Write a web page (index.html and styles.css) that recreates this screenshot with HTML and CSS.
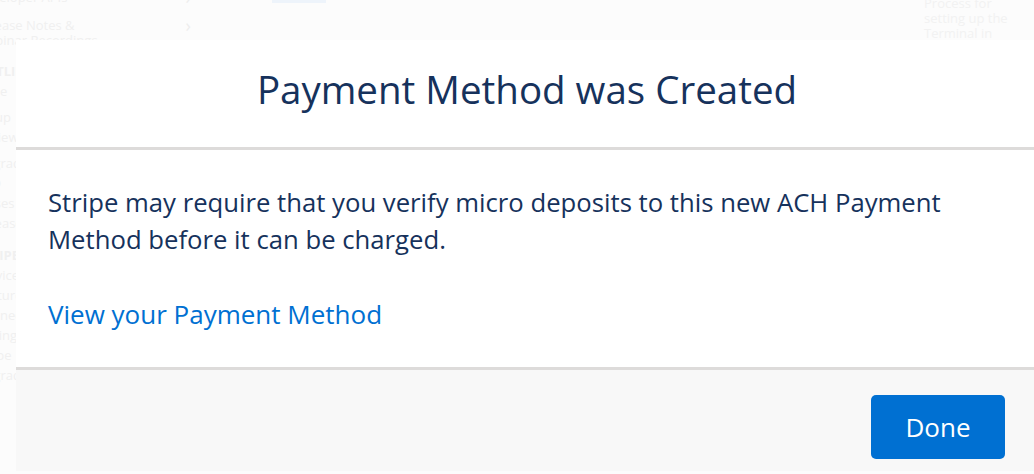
FILE: index.html
```html
<!DOCTYPE html>
<html lang="en">
<head>
  <meta charset="UTF-8" />
  <title>Payment Method was Created</title>
  <link rel="stylesheet" href="styles.css">
</head>
<body>
  <!-- Page behind the modal -->
  <div class="page">
    <nav class="sidebar">
      <div class="navItem"><span>Developer APIs</span><span class="chev">&#8250;</span></div>
      <div class="navItem wrap"><span>Release Notes &amp; Webinar Recordings</span><span class="chev">&#8250;</span></div>
      <p class="heading">OUTLINE</p>
      <p>Code</p>
      <p class="gap">Setup</p>
      <p>Review items</p>
      <p class="gap">Upgrade</p>
      <p>FAQ</p>
      <p>&nbsp;Cases</p>
      <p>Release</p>
      <p class="heading">STRIPE</p>
      <p>Services</p>
      <p>Features</p>
      <p>Connect</p>
      <p>Pricing</p>
      <p>Stripe</p>
      <p>Upgrade</p>
    </nav>
    <div class="main">
      <div class="tab"></div>
      <div class="sideNote">
        <p>Process for setting up the</p>
        <p>Terminal in Lightning</p>
        <p class="next">Salesforce Checkout</p>
      </div>
    </div>
  </div>

  <!-- Modal -->
  <section class="modal">
    <header class="modalHeader">
      <h2>Payment Method was Created</h2>
    </header>
    <div class="modalBody">
      <p>Stripe may require that you verify micro deposits to this new ACH Payment Method before it can be charged.</p>
      <a href="#" class="link">View your Payment Method</a>
    </div>
    <footer class="modalFooter">
      <button class="doneButton">Done</button>
    </footer>
  </section>
</body>
</html>
```

FILE: styles.css
```css
body {
  margin: 0;
  font-family: "Open Sans", Arial, sans-serif;
  background-color: #fcfcfc;
  overflow: hidden;
  height: 474px;
  position: relative;
}

/* Faded page behind the modal */
.page {
  display: flex;
  color: #f0f0f0;
  font-size: 13px;
}

.sidebar {
  width: 215px;
  margin-left: -24px;
  margin-top: -10px;
  flex-shrink: 0;
}

.navItem {
  display: flex;
  justify-content: space-between;
  line-height: 15px;
  margin-bottom: 13px;
}

.navItem.wrap span:first-child {
  width: 150px;
}

.chev {
  font-size: 18px;
  color: #eeeeee;
}

.sidebar p {
  margin: 0;
  line-height: 20px;
}

.sidebar .gap {
  margin-top: 6px;
}

.sidebar .heading {
  font-weight: bold;
  margin-top: 12px;
}

.main {
  flex: 1;
  display: flex;
}

.tab {
  width: 54px;
  height: 3px;
  margin-left: 81px;
  background-color: #eef4fb;
}

.sideNote {
  margin-left: auto;
  width: 110px;
  margin-top: -4px;
  color: #f2f2f2;
}

.sideNote p {
  margin: 0;
  line-height: 15px;
}

.sideNote .next {
  margin-top: 10px;
}

/* Modal */
.modal {
  position: absolute;
  top: 40px;
  left: 16px;
  width: 1022px;
  background-color: #fff;
  color: #16325c;
}

.modalHeader {
  height: 107px;
  display: flex;
  align-items: center;
  justify-content: center;
  border-bottom: 3px solid #dddbda;
}

.modalHeader h2 {
  margin: 0 0 10px;
  font-size: 38.5px;
  font-weight: normal;
}

.modalBody {
  height: 217px;
  box-sizing: border-box;
  padding: 34px 60px 0 32px;
}

.modalBody p {
  margin: 0 0 38px;
  font-size: 25.7px;
  line-height: 37px;
}

.link {
  color: #0070d2;
  text-decoration: none;
  font-size: 26px;
  line-height: 37px;
}

.modalFooter {
  border-top: 3px solid #dddbda;
  background-color: #f8f8f8;
  height: 104px;
  padding: 25px 33px 0 0;
  box-sizing: border-box;
  display: flex;
  justify-content: flex-end;
  align-items: flex-start;
}

.doneButton {
  width: 134px;
  height: 64px;
  border: none;
  border-radius: 5px;
  background-color: #0070d2;
  color: #fff;
  font-family: inherit;
  font-size: 26px;
}
```
